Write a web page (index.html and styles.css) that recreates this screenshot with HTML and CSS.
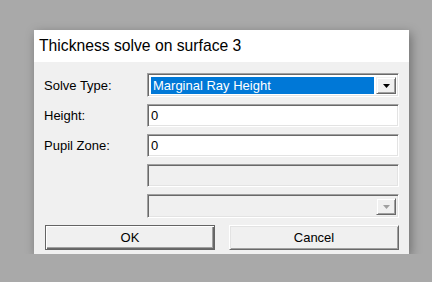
FILE: index.html
```html
<!DOCTYPE html>
<html lang="en">

<head>
    <meta charset="UTF-8">
    <title>Thickness solve on surface 3</title>
    <link rel="stylesheet" href="styles.css">
</head>

<body>
    <div class="dialog">
        <div class="title-bar">Thickness solve on surface 3</div>

        <div class="form">
            <label class="label">Solve Type:</label>
            <div class="combo">
                <div class="combo-value">Marginal Ray Height</div>
                <div class="combo-btn">
                    <svg width="7" height="4" viewBox="0 0 7 4"><polygon points="0,0 7,0 3.5,4" fill="#000"/></svg>
                </div>
            </div>

            <label class="label">Height:</label>
            <div class="textbox">0</div>

            <label class="label">Pupil Zone:</label>
            <div class="textbox">0</div>

            <span></span>
            <div class="textbox disabled"></div>

            <span></span>
            <div class="combo disabled">
                <div class="combo-value"></div>
                <div class="combo-btn">
                    <svg width="7" height="4" viewBox="0 0 7 4"><polygon points="0,0 7,0 3.5,4" fill="#a0a0a0"/></svg>
                </div>
            </div>
        </div>

        <div class="button-row">
            <button class="btn btn-default">OK</button>
            <button class="btn">Cancel</button>
        </div>
    </div>
</body>

</html>
```

FILE: styles.css
```css
body {
    margin: 0;
    padding: 30px 0 0 34px;
    background-color: #a9a9a9;
    font-family: "Liberation Sans", Arial, sans-serif;
    font-size: 13px;
    color: #000;
}

.dialog {
    width: 375px;
    height: 224px;
    background-color: #f0f0f0;
    box-shadow: 2px 3px 10px rgba(0, 0, 0, 0.35);
}

.title-bar {
    height: 32px;
    line-height: 32px;
    padding-left: 5px;
    background-color: #fff;
    font-size: 15.7px;
}

.form {
    display: grid;
    grid-template-columns: 103px 252px;
    grid-template-rows: 24px 23px 23px 23px 24px;
    row-gap: 7px;
    padding: 11px 10px 0 10px;
}

.label {
    display: flex;
    align-items: center;
}

/* sunken 3d frame */
.textbox,
.combo {
    box-sizing: border-box;
    border: 1px solid;
    border-color: #a0a0a0 #fff #fff #a0a0a0;
    box-shadow: inset 1px 1px 0 #696969, inset -1px -1px 0 #e3e3e3;
    background-color: #fff;
}

.textbox {
    display: flex;
    align-items: center;
    padding-left: 3px;
}

.textbox.disabled,
.combo.disabled {
    background-color: #f0f0f0;
}

.combo {
    display: flex;
    padding: 3px 2px 2px 3px;
    gap: 2px;
}

.combo-value {
    flex: 1;
    display: flex;
    align-items: center;
    padding-left: 2px;
    background-color: #0078d7;
    color: #fff;
}

.combo.disabled .combo-value {
    background-color: transparent;
}

.combo-btn {
    box-sizing: border-box;
    width: 20px;
    display: flex;
    align-items: center;
    justify-content: center;
    background-color: #f0f0f0;
    border: 1px solid;
    border-color: #f0f0f0 #696969 #696969 #f0f0f0;
    box-shadow: inset 1px 1px 0 #fff, inset -1px -1px 0 #a0a0a0;
}

.button-row {
    display: flex;
    gap: 14px;
    padding: 7px 10px 0 11px;
}

.btn {
    flex: 1;
    height: 25px;
    margin: 0;
    padding: 0;
    font-family: "Liberation Sans", Arial, sans-serif;
    font-size: 13px;
    color: #000;
    background-color: #f0f0f0;
    border: 1px solid;
    border-color: #fff #696969 #696969 #fff;
    box-shadow: inset 1px 1px 0 #e3e3e3, inset -1px -1px 0 #a0a0a0;
}

.btn-default {
    border-color: #646464;
    box-shadow: inset 1px 1px 0 #fff, inset -1px -1px 0 #696969, inset -2px -2px 0 #a0a0a0;
}
```
